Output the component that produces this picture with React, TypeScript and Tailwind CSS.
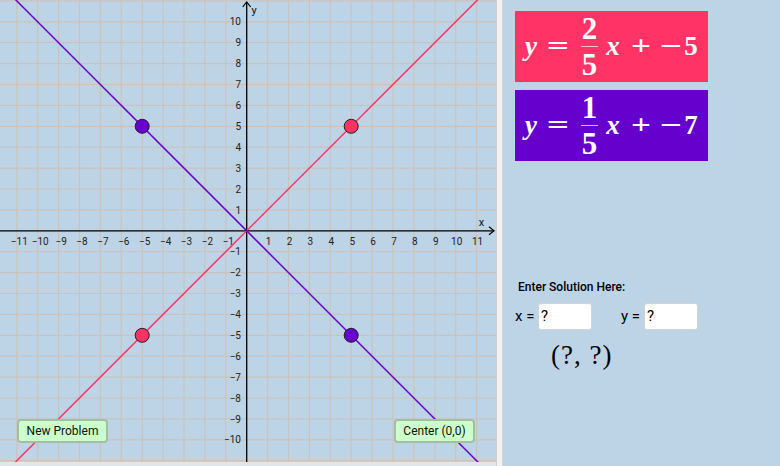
import React from "react";

const U = 20.9;
const OX = 246.7;
const OY = 230.8;
const W = 496;
const H = 462;
const px = (u: number) => OX + u * U;
const py = (u: number) => OY - u * U;

const PINK = "#ff3366";
const PURPLE = "#6600cc";

function Graph() {
  const idx = Array.from({ length: 27 }, (_, i) => i - 13);
  const xl = Array.from({ length: 23 }, (_, i) => i - 11).filter((v) => v !== 0);
  const yl = Array.from({ length: 21 }, (_, i) => i - 10).filter((v) => v !== 0);
  const lab = (v: number) => (v < 0 ? "\u2212" + Math.abs(v) : String(v));
  return (
    <svg width={W} height={H} className="block" style={{ fontFamily: "Roboto, 'Liberation Sans', sans-serif" }}>
      <rect width={W} height={H} fill="#bdd4e7" />
      {idx.map((i) => (
        <line key={"v" + i} x1={px(i)} x2={px(i)} y1={0} y2={H} stroke="#cbc3bb" strokeWidth={1.2} />
      ))}
      {idx.map((i) => (
        <line key={"h" + i} x1={0} x2={W} y1={py(i)} y2={py(i)} stroke="#cbc3bb" strokeWidth={1.2} />
      ))}
      <line x1={0} x2={494} y1={OY} y2={OY} stroke="#000" strokeWidth={1.3} />
      <line x1={OX} x2={OX} y1={2} y2={H} stroke="#000" strokeWidth={1.3} />
      <polyline points={`${OX - 4},7 ${OX},2 ${OX + 4},7`} fill="none" stroke="#000" strokeWidth={1.2} />
      <polyline points={`489,${OY - 4} 494,${OY} 489,${OY + 4}`} fill="none" stroke="#000" strokeWidth={1.2} />
      <text x={481.5} y={226} fontSize={11} textAnchor="middle" fill="#111">x</text>
      <text x={254} y={14} fontSize={11} textAnchor="middle" fill="#111">y</text>
      {xl.map((v) => (
        <text key={"xl" + v} x={px(v) + (v < 0 ? 2.5 : 1)} y={245} fontSize={10} textAnchor="middle" fill="#222">
          {lab(v)}
        </text>
      ))}
      {yl.map((v) => (
        <text key={"yl" + v} x={241} y={py(v) + 3.6} fontSize={10} textAnchor="end" fill="#222">
          {lab(v)}
        </text>
      ))}
      <line x1={px(-13)} y1={py(-13)} x2={px(13)} y2={py(13)} stroke={PINK} strokeWidth={1.5} />
      <line x1={px(-13)} y1={py(13)} x2={px(13)} y2={py(-13)} stroke={PURPLE} strokeWidth={1.5} />
      <circle cx={px(5)} cy={py(5)} r={7} fill={PINK} stroke="#222" strokeWidth={1} />
      <circle cx={px(-5)} cy={py(-5)} r={7} fill={PINK} stroke="#222" strokeWidth={1} />
      <circle cx={px(-5)} cy={py(5)} r={7} fill={PURPLE} stroke="#222" strokeWidth={1} />
      <circle cx={px(5)} cy={py(-5)} r={7} fill={PURPLE} stroke="#222" strokeWidth={1} />
    </svg>
  );
}

function Eq({ num, c, bg }: { num: string; c: string; bg: string }) {
  return (
    <div
      className={`w-[193px] h-[71px] flex items-center pl-[9px] text-white text-[27px] leading-none font-bold ${bg}`}
      style={{ fontFamily: "'Liberation Serif', 'DejaVu Serif', serif" }}
    >
      <span className="italic w-[14px] flex justify-center pb-[1px]">y</span>
      <span className="ml-[9px] w-[22px] flex justify-center scale-x-[1.45]">=</span>
      <span className="ml-[12px] flex flex-col items-center w-[17px] text-[31px]">
        <span className="leading-none">{num}</span>
        <span className="block w-[17px] h-[1.5px] bg-white/70 my-[2px]"></span>
        <span className="leading-none">5</span>
      </span>
      <span className="ml-[8px] italic w-[14px] flex justify-center pb-[1px]">x</span>
      <span className="ml-[11px] w-[20px] flex justify-center scale-x-[1.3]">+</span>
      <span className="ml-[10px] w-[20px] flex justify-center scale-x-[1.45]">{"\u2212"}</span>
      <span className="ml-[3px] w-[14px] flex justify-center">{c}</span>
    </div>
  );
}

export default function App() {
  return (
    <div className="w-[780px] h-[466px] flex bg-[#bdd4e7] overflow-hidden" style={{ fontFamily: "Roboto, 'Liberation Sans', sans-serif" }}>
      <div className="w-[496px] h-[466px] flex flex-col relative">
        <Graph />
        <div className="flex-1 bg-[#dfe7ee]"></div>
        <button className="absolute left-[17px] top-[419px] w-[91px] h-[24px] rounded-[4px] bg-[#ccffcc] border-2 border-[#a3bfa3] text-[12px] text-[#111] flex items-center justify-center">
          New Problem
        </button>
        <button className="absolute left-[394px] top-[419px] w-[81px] h-[24px] rounded-[4px] bg-[#ccffcc] border-2 border-[#a3bfa3] text-[12px] text-[#111] flex items-center justify-center">
          Center (0,0)
        </button>
      </div>
      <div className="w-[6px] h-full bg-[#f1f1f1] border-l border-[#d0d0d0]"></div>
      <div className="flex-1 flex flex-col pl-[12px] pt-[11px] border-l border-[#cfd6dc]">
        <Eq num="2" c="5" bg="bg-[#ff3366]" />
        <div className="h-[8px]"></div>
        <Eq num="1" c="7" bg="bg-[#6600cc]" />
        <div className="mt-[120px] pl-[3px] text-[12px] font-medium text-black leading-none">Enter Solution Here:</div>
        <div className="mt-[10px] flex items-center text-[15px] text-black">
          <span className="w-[23px]">x =</span>
          <div className="w-[54px] h-[27px] bg-white rounded-[3px] border border-[#d4d4d4] flex items-center pl-[2px]">?</div>
          <span className="ml-[29px] w-[23px]">y =</span>
          <div className="w-[54px] h-[27px] bg-white rounded-[3px] border border-[#d4d4d4] flex items-center pl-[2px]">?</div>
        </div>
        <div
          className="mt-[12px] ml-[36px] text-[27px] leading-none text-black tracking-[1px]"
          style={{ fontFamily: "'Liberation Serif', 'DejaVu Serif', serif" }}
        >
          (?, ?)
        </div>
      </div>
    </div>
  );
}
